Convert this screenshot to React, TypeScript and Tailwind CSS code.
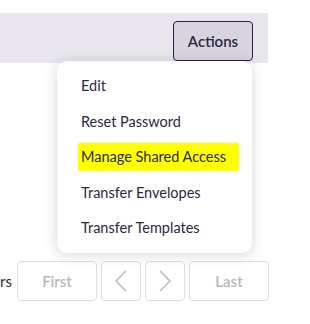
import React from "react";

export default function App() {
  const items = ["Edit", "Reset Password", "Manage Shared Access", "Transfer Envelopes", "Transfer Templates"];
  return (
    <div className="relative w-[310px] h-[324px] overflow-hidden bg-white" style={{ fontFamily: "Lato, 'Noto Sans', sans-serif" }}>
      <div className="h-[13px]" />
      <div className="w-[268px] h-[50px] bg-[#e8e5ec] flex items-start justify-end pr-[15px] pt-[8px]">
        <div className="relative">
          <button className="w-[80px] h-[40px] rounded-[4px] border border-[#2a1f4a] bg-[#d8d4de] text-[#2b2740] text-[15px] font-semibold flex items-center justify-center">
            Actions
          </button>
          <div className="absolute top-full right-[1px] w-[195px] z-10 bg-white rounded-[10px] shadow-[0_2px_14px_rgba(40,30,70,0.18)] py-[7.25px]">
            {items.map((t) => (
              <div key={t} className="h-[35.5px] flex items-center pl-[24px] text-[14.5px] text-[#2a2740]">
                {t === "Manage Shared Access" ? (
                  <span className="bg-[#ffff00] -ml-[3px] pl-[3px] pr-[13px] py-[3px] rounded-[2px]">{t}</span>
                ) : (
                  t
                )}
              </div>
            ))}
          </div>
        </div>
      </div>
      <div className="mt-[198px] flex items-center">
        <span className="text-[15px] text-[#2a2740] w-[17px]">rs</span>
        <div className="flex gap-[4px]">
          <button className="w-[80px] h-[40px] rounded-[4px] border border-[#dddbe0] text-[#b8b6bc] text-[15px] font-semibold">First</button>
          <button className="w-[40px] h-[40px] rounded-[4px] border border-[#dddbe0] flex items-center justify-center">
            <svg width="16" height="24" viewBox="0 0 16 24" fill="none" stroke="#bdbbc1" strokeWidth="1.6"><path d="M13 2 L3 12 L13 22" /></svg>
          </button>
          <button className="w-[40px] h-[40px] rounded-[4px] border border-[#dddbe0] flex items-center justify-center">
            <svg width="16" height="24" viewBox="0 0 16 24" fill="none" stroke="#bdbbc1" strokeWidth="1.6"><path d="M3 2 L13 12 L3 22" /></svg>
          </button>
          <button className="w-[80px] h-[40px] rounded-[4px] border border-[#dddbe0] text-[#b8b6bc] text-[15px] font-semibold">Last</button>
        </div>
      </div>
    </div>
  );
}
